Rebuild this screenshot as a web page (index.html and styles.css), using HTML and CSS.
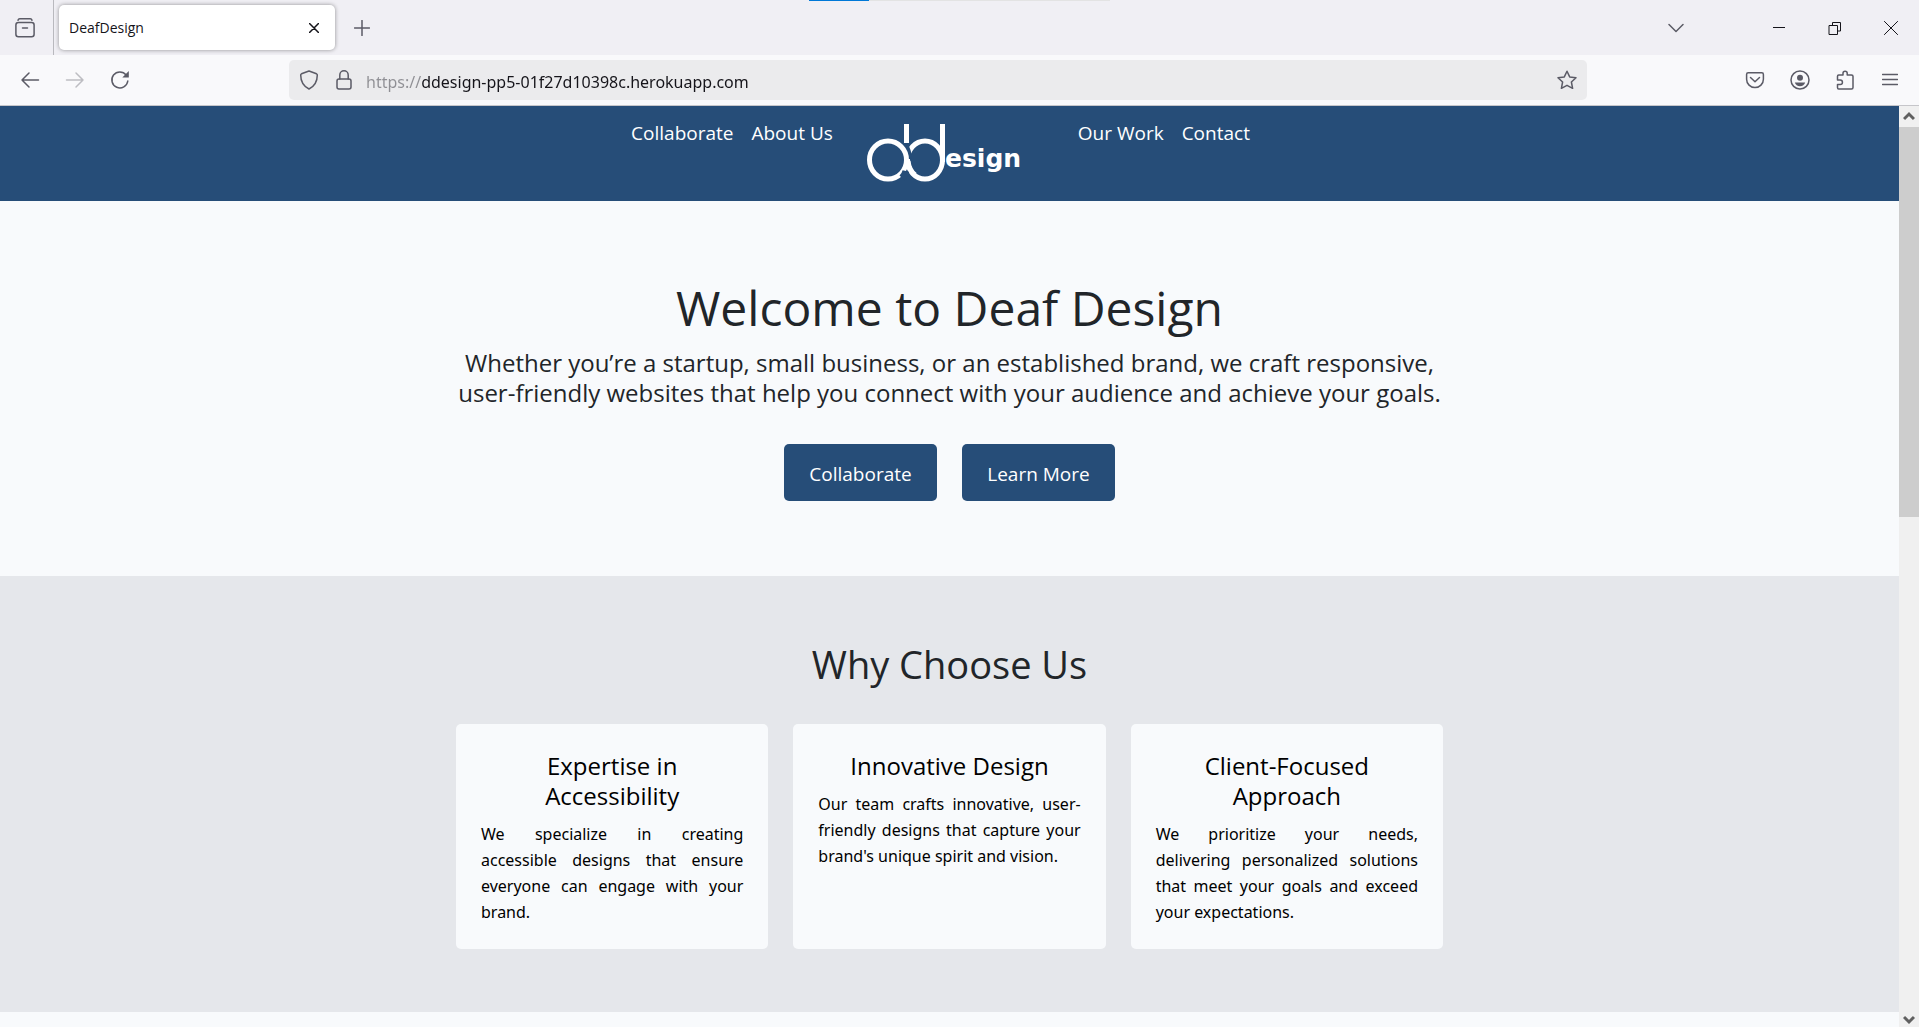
FILE: index.html
```html
<!DOCTYPE html>
<html lang="en">
<head>
<meta charset="utf-8">
<meta name="viewport" content="width=device-width, initial-scale=1">
<title>DeafDesign</title>
<link rel="stylesheet" href="styles.css">
</head>
<body>
<div class="load-bar"></div>
<header class="tab-strip">
  <button class="icon-btn" aria-label="Recent browsing">
    <svg width="20" height="20" viewBox="0 0 20 20"><path d="M3 2.2q.4-1.4 1.8-1.4h10.400q1.400 0 1.800 1.400"/><rect x=".9" y="4.600" width="18.200" height="14.200" rx="2.500"/><path d="M7.500 10h5"/></svg>
  </button>
  <div class="tab">
    <span class="tab-title">DeafDesign</span>
    <button class="tab-close" aria-label="Close tab"><svg width="10" height="10" viewBox="0 0 10 10"><path d="M.5.5l9 9M9.500.5l-9 9"/></svg></button>
  </div>
  <button class="icon-btn new-tab" aria-label="New tab"><svg width="16" height="16" viewBox="0 0 16 16"><path d="M8 .5v15M.5 8h15"/></svg></button>
  <button class="icon-btn tab-list" aria-label="List all tabs"><svg width="16" height="16" viewBox="0 0 16 16"><path d="M1 4.500l7 7 7-7"/></svg></button>
  <button class="win-btn" aria-label="Minimize"><svg width="14" height="14" viewBox="0 0 14 14"><path d="M1.500 6.500h11"/></svg></button>
  <button class="win-btn" aria-label="Restore"><svg width="14" height="14" viewBox="0 0 14 14"><path d="M1.500 4.500h8v9h-8zM4.500 4V1.500h8v8.500H10"/></svg></button>
  <button class="win-btn" aria-label="Close"><svg width="14" height="14" viewBox="0 0 14 14"><path d="M.5.5l13 13M13.500.5l-13 13"/></svg></button>
</header>
<div class="toolbar">
  <button class="icon-btn" aria-label="Back"><svg width="20" height="20" viewBox="0 0 20 20"><path d="M18.500 10H2M9 3L2 10l7 7"/></svg></button>
  <button class="icon-btn" aria-label="Forward" disabled><svg width="20" height="20" viewBox="0 0 20 20"><path d="M1.500 10H18M11 3l7 7-7 7"/></svg></button>
  <button class="icon-btn" aria-label="Reload"><svg width="20" height="20" viewBox="0 0 20 20"><path d="M17.800 11a8 8 0 1 1-1.600-6"/><path class="solid" d="M18.800 1v6.500h-6.500z"/></svg></button>
  <div class="url-bar">
    <svg width="20" height="20" viewBox="0 0 20 20"><path d="M10 1l7.500 2.800q.8.400.8 1.200c0 6-2.300 11-8.300 14-6-3-8.300-8-8.300-14q0-.8.800-1.200z"/></svg>
    <svg width="20" height="20" viewBox="0 0 20 20"><rect x="3" y="9" width="14" height="10" rx="2"/><path d="M5.800 9V5a4.200 4.200 0 0 1 8.400 0v4"/></svg>
    <input class="url" type="text" aria-label="Address" value="https://ddesign-pp5-01f27d10398c.herokuapp.com">
    <button class="star" aria-label="Bookmark this page"><svg width="20" height="20" viewBox="0 0 20 20"><path d="M10 1.200l2.700 5.700 6.300.8-4.600 4.300 1.200 6.300L10 15.300l-5.600 3 1.200-6.300L1 7.700l6.300-.8z"/></svg></button>
  </div>
  <button class="icon-btn" aria-label="Save to Pocket"><svg width="20" height="20" viewBox="0 0 20 20"><path d="M3.200 2.800h13.600q1.600 0 1.600 1.600v4.800a8.400 8.400 0 0 1-16.800 0V4.400q0-1.600 1.600-1.600z"/><path d="M5.500 7.500L10 11.800l4.500-4.300"/></svg></button>
  <button class="icon-btn" aria-label="Account"><svg width="20" height="20" viewBox="0 0 20 20"><circle cx="10" cy="10" r="9"/><circle class="solid" cx="10" cy="7.800" r="3"/><path class="solid" d="M4.800 12.500h10.400q-1.200 3.700-5.200 3.700t-5.200-3.700z"/></svg></button>
  <button class="icon-btn" aria-label="Extensions"><svg width="20" height="20" viewBox="0 0 20 20"><path d="M2.500 8V6.200q0-1.200 1.200-1.200H8V3.300a2.100 2.100 0 0 1 4.200 0V5h4.300q1.500 0 1.500 1.200v11.300q0 1.500-1.500 1.500H3.700q-1.200 0-1.200-1.500V14.500h2.700a2.200 2.200 0 0 0 0-4.500H2.500z"/></svg></button>
  <button class="icon-btn" aria-label="Menu"><svg width="16" height="16" viewBox="0 0 16 16"><path d="M.5 2.500h15M.5 7.500h15M.5 12.500h15"/></svg></button>
</div>
<div class="viewport">
  <main class="page">
    <nav class="site-nav">
      <a href="#collaborate">Collaborate</a>
      <a href="#about">About Us</a>
      <a class="logo" href="#home" aria-label="Ddesign home">
        <svg width="160" height="64" viewBox="0 0 160 64">
          <ellipse cx="59" cy="36" rx="17.500" ry="19"/>
          <path class="gap" d="M38 21q4.500 6 4.500 14"/>
          <ellipse cx="22" cy="36" rx="18.500" ry="19"/>
          <path class="gap" d="M36 54q3-3 4-7"/>
          <path d="M42 37q1 9 7 14M40.500 0v19M76.500 0v38"/>
          <text x="79" y="43">esign</text>
        </svg>
      </a>
      <a href="#work">Our Work</a>
      <a href="#contact">Contact</a>
    </nav>
    <section class="hero">
      <h1>Welcome to Deaf Design</h1>
      <p>Whether you’re a startup, small business, or an established brand, we craft responsive, user-friendly websites that help you connect with your audience and achieve your goals.</p>
      <div class="actions">
        <a class="btn" href="#collaborate">Collaborate</a>
        <a class="btn" href="#about">Learn More</a>
      </div>
    </section>
    <section class="why">
      <h2>Why Choose Us</h2>
      <div class="cards">
        <article class="card">
          <h3>Expertise in Accessibility</h3>
          <p>We specialize in creating accessible designs that ensure everyone can engage with your brand.</p>
        </article>
        <article class="card">
          <h3>Innovative Design</h3>
          <p>Our team crafts innovative, user-friendly designs that capture your brand's unique spirit and vision.</p>
        </article>
        <article class="card">
          <h3>Client-Focused Approach</h3>
          <p>We prioritize your needs, delivering personalized solutions that meet your goals and exceed your expectations.</p>
        </article>
      </div>
    </section>
  </main>
  <div class="scrollbar">
    <svg width="12" height="21" viewBox="0 0 12 21"><path d="M1 13l5-5 5 5"/></svg>
    <div class="track"><div class="thumb"></div></div>
    <svg width="12" height="20" viewBox="0 0 12 20"><path d="M1 10l5 5 5-5"/></svg>
  </div>
</div>
</body>
</html>
```

FILE: styles.css
```css
* { box-sizing: border-box; }

body {
  margin: 0;
  height: 100vh;
  display: flex;
  flex-direction: column;
  overflow: hidden;
  font-family: "Open Sans", "Noto Sans", sans-serif;
  font-size: 16px;
  color: #212529;
}

h1, h2, h3, p { margin: 0; font-weight: 400; }
a { color: inherit; text-decoration: none; }
button { border: 0; padding: 0; background: none; font: inherit; color: inherit; }
svg { display: block; flex: none; fill: none; stroke: currentColor; stroke-width: 1.5; stroke-linecap: round; stroke-linejoin: round; }
.solid { fill: currentColor; stroke: none; }

/* Browser chrome */
.load-bar {
  position: absolute;
  top: 0;
  left: 0;
  right: 0;
  width: 301px;
  height: 1px;
  margin: 0 auto;
  background: linear-gradient(to right, #0078d7 20%, #e3e3e3 20%);
}

.tab-strip {
  flex: none;
  display: flex;
  align-items: center;
  height: 55px;
  background: #f0eff4;
  color: #5b5b66;
}

.icon-btn {
  flex: none;
  display: flex;
  align-items: center;
  justify-content: center;
  width: 45px;
  height: 40px;
}
.icon-btn:disabled { color: #bdbdc2; }

.tab-strip > .icon-btn:first-child { width: 54px; height: 55px; padding-right: 3px; border-right: 1px solid #b9b9be; }

.tab {
  display: flex;
  align-items: center;
  justify-content: space-between;
  width: 276px;
  height: 45px;
  margin-left: 5px;
  padding: 0 16px 0 10px;
  border-radius: 5px;
  background: #fff;
  box-shadow: 0 0 4px rgba(0, 0, 0, .4);
  color: #15141a;
}
.tab-title { font-size: 14px; }
.new-tab { margin-left: 4px; }
.tab-list { margin: 0 53px 0 auto; }

.win-btn {
  display: flex;
  align-items: center;
  justify-content: center;
  width: 56px;
  height: 55px;
  color: #15141a;
}
.win-btn svg { stroke-width: 1; stroke-linecap: square; stroke-linejoin: miter; }

.toolbar {
  flex: none;
  display: flex;
  align-items: center;
  height: 51px;
  padding: 0 7px;
  border-bottom: 1px solid #c6c6ca;
  background: #f9f9fb;
  color: #5b5b66;
}

.url-bar {
  flex: 1;
  display: flex;
  align-items: center;
  gap: 15px;
  height: 40px;
  margin: 0 145px 0 147px;
  padding: 0 10px;
  border-radius: 5px;
  background: #ebebed;
}
.url {
  flex: 1;
  min-width: 0;
  height: 40px;
  padding: 3px 0 0;
  margin-left: -3px;
  border: 0;
  outline: 0;
  font: 16px "Noto Sans", sans-serif;
  color: transparent;
  background: linear-gradient(to right, #8f8f94 56px, #15141a 56px);
  background-clip: text;
}

/* Page viewport */
.viewport { flex: 1; display: flex; min-height: 0; }
.page { flex: 1; overflow: hidden; background: #f8fafc; }

.site-nav {
  display: flex;
  justify-content: center;
  gap: 18px;
  height: 95px;
  padding: 12px 18px 0 0;
  background: #264d78;
  color: #fff;
  font-size: 19px;
  line-height: 30px;
}
.logo { margin: 6px 34px 0 15px; }
.logo svg { stroke-width: 5; stroke-linecap: butt; }
.logo .gap { stroke: #264d78; stroke-width: 7; }
.logo text { fill: #fff; stroke: none; font: 700 25px "DejaVu Sans", sans-serif; }

.hero { padding: 77px 20px 75px; text-align: center; }
.hero h1 { margin-bottom: 10px; font-size: 48px; line-height: 60px; }
.hero p { max-width: 988px; margin: 0 auto 36px; font-size: 24px; line-height: 30px; }

.actions { display: flex; justify-content: center; gap: 25px; }
.btn {
  min-width: 153px;
  padding: 15px 25px 12px;
  border-radius: 5px;
  background: #264d78;
  color: #fff;
  font-size: 19px;
  line-height: 30px;
}

.why { padding: 64px 20px 63px; background: #e5e7eb; }
.why h2 { margin-bottom: 36px; font-size: 38px; line-height: 48px; text-align: center; }

.cards {
  display: grid;
  grid-template-columns: repeat(3, 1fr);
  gap: 25px;
  max-width: 987px;
  margin: 0 auto;
}
.card { padding: 27px 25px 24px; border-radius: 5px; background: #f8fafc; color: #000; }
.card h3 { margin-bottom: 10px; font-size: 24px; line-height: 30px; text-align: center; }
.card p { font-family: "Noto Sans", sans-serif; line-height: 26px; text-align: justify; }

.scrollbar {
  flex: none;
  display: flex;
  flex-direction: column;
  align-items: center;
  width: 20px;
  background: #f0f0f0;
  color: #606060;
}
.scrollbar svg { stroke-width: 3; stroke-linecap: butt; stroke-linejoin: miter; }
.track { flex: 1; width: 100%; }
.thumb { height: 44.3%; background: #cdcdcd; }
```
